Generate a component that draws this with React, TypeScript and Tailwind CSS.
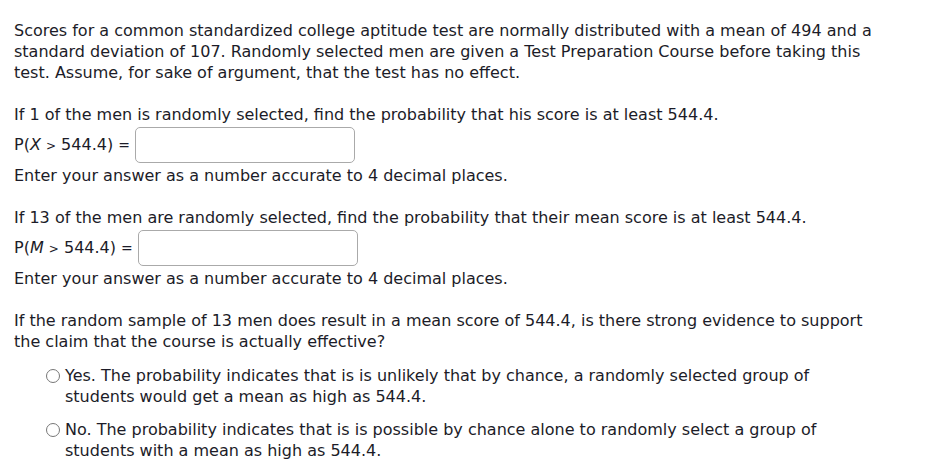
export default function App() {
  return (
    <div className="min-h-screen bg-white px-[14px] pt-[20px] text-[16px] leading-[21px] text-[#1c1c28]" style={{ fontFamily: '"DejaVu Sans", Verdana, sans-serif' }}>
      <p>
        Scores for a common standardized college aptitude test are normally distributed with a mean of 494 and a<br />
        standard deviation of 107. Randomly selected men are given a Test Preparation Course before taking this<br />
        test. Assume, for sake of argument, that the test has no effect.
      </p>

      <p className="mt-[21px]">If 1 of the men is randomly selected, find the probability that his score is at least 544.4.</p>
      <div className="flex h-[40px] items-center gap-[5px]">
        <span>
          P(<i>X</i> <span className="text-[12px]">&gt;</span> 544.4) <span className="text-[14px]">=</span>
        </span>
        <input type="text" className="h-[36px] w-[220px] rounded-[5px] border border-[#aaaaaa] bg-white" />
      </div>
      <p>Enter your answer as a number accurate to 4 decimal places.</p>

      <p className="mt-[21px]">If 13 of the men are randomly selected, find the probability that their mean score is at least 544.4.</p>
      <div className="flex h-[40px] items-center gap-[5px]">
        <span>
          P(<i>M</i> <span className="text-[12px]">&gt;</span> 544.4) <span className="text-[14px]">=</span>
        </span>
        <input type="text" className="h-[36px] w-[220px] rounded-[5px] border border-[#aaaaaa] bg-white" />
      </div>
      <p>Enter your answer as a number accurate to 4 decimal places.</p>

      <p className="mt-[21px]">
        If the random sample of 13 men does result in a mean score of 544.4, is there strong evidence to support<br />
        the claim that the course is actually effective?
      </p>

      <div className="mt-[13px] space-y-[12px] pl-[32px]">
        <label className="flex items-start gap-[5px]">
          <span className="mt-[4px] h-[14px] w-[14px] shrink-0 rounded-full border border-[#777777] bg-white" />
          <span>
            Yes. The probability indicates that is is unlikely that by chance, a randomly selected group of<br />
            students would get a mean as high as 544.4.
          </span>
        </label>
        <label className="flex items-start gap-[5px]">
          <span className="mt-[4px] h-[14px] w-[14px] shrink-0 rounded-full border border-[#777777] bg-white" />
          <span>
            No. The probability indicates that is is possible by chance alone to randomly select a group of<br />
            students with a mean as high as 544.4.
          </span>
        </label>
      </div>
    </div>
  );
}
